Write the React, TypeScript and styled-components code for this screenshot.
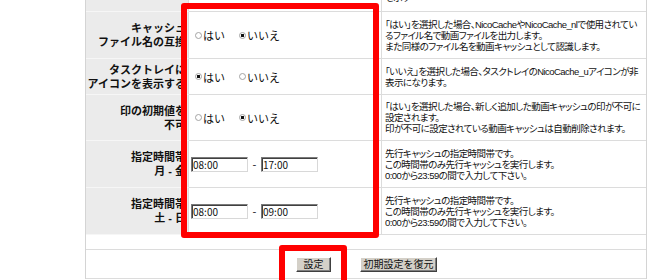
import React from 'react';
import styled, { createGlobalStyle } from 'styled-components';

const GlobalStyle = createGlobalStyle`
  html, body {
    margin: 0;
    padding: 0;
    background: #ffffff;
    overflow: hidden;
  }
  body {
    font-family: "Noto Sans CJK JP", "Noto Sans", sans-serif;
    color: #111;
  }
`;

const Page = styled.div`
  position: relative;
  width: 650px;
  height: 280px;
  overflow: hidden;
`;

const Sheet = styled.div`
  margin-left: 85px;
  margin-top: -28px;
  width: 562px;
  box-sizing: border-box;
  border-left: 1px solid #d4d4d4;
  border-right: 1px solid #d4d4d4;
`;

const Row = styled.div<{ $h: number }>`
  display: grid;
  grid-template-columns: 103px 193px 264px;
  height: ${p => p.$h}px;
`;

const LabelCell = styled.div`
  display: flex;
  flex-direction: column;
  justify-content: center;
  align-items: flex-end;
  box-sizing: border-box;
  padding-right: 2px;
  background: #ebebeb;
  border-right: 1px solid #dcdcdc;
  border-bottom: 1px solid #f6f6f6;
  font-family: "Liberation Sans", "Noto Sans CJK JP", sans-serif;
  font-size: 11px;
  font-weight: bold;
  white-space: nowrap;
  text-align: right;
`;

const ControlCell = styled.div`
  display: flex;
  align-items: center;
  box-sizing: border-box;
  padding-left: 2px;
  border-right: 1px solid #dcdcdc;
  border-bottom: 1px solid #dcdcdc;
  font-size: 11px;
`;

const DescCell = styled.div`
  display: flex;
  flex-direction: column;
  justify-content: center;
  box-sizing: border-box;
  padding-left: 3px;
  border-bottom: 1px solid #dcdcdc;
  font-family: "Liberation Sans", "Noto Sans CJK JP", sans-serif;
  font-size: 9.5px;
  letter-spacing: -0.55px;
  font-feature-settings: "palt";
  white-space: nowrap;
  overflow: hidden;
`;

const DescLine = styled.span`
  display: block;
  height: 11px;
  line-height: 11px;
`;

const LabelLine = styled.span`
  display: block;
  height: 14px;
  line-height: 14px;
`;

const RadioOption = styled.label`
  display: inline-flex;
  align-items: center;
  margin-right: 10px;
  line-height: 12px;
`;

const Radio = styled.input.attrs({ type: 'radio' })`
  appearance: none;
  -webkit-appearance: none;
  box-sizing: border-box;
  margin: 0 1px 0 4px;
  width: 7px;
  height: 7px;
  border: 1px solid #a4a4a4;
  border-radius: 50%;
  background: #fff;

  &:checked {
    background: radial-gradient(circle, #111 0 1.4px, #fff 1.9px);
  }
`;

const TimeField = styled.input`
  box-sizing: border-box;
  width: 57px;
  height: 15px;
  margin: 0;
  padding: 0 0 0 1px;
  border: 1px solid;
  border-color: #7a7a7a #d8d8d8 #d8d8d8 #7a7a7a;
  box-shadow: inset 1px 1px 0 #404040;
  font-family: "Noto Sans CJK JP", "Noto Sans", sans-serif;
  font-size: 10px;
  line-height: 13px;
  color: #111;
  background: #fff;
`;

const Dash = styled.span`
  width: 13px;
  text-align: center;
  font-size: 11px;
`;

const BlankRow = styled.div`
  height: 14px;
  border-bottom: 1px solid #dcdcdc;
`;

const ButtonRow = styled.div`
  display: flex;
  justify-content: center;
  align-items: center;
  gap: 29px;
  height: 29px;
  box-sizing: border-box;
  padding-left: 1px;
  border-bottom: 1px solid #dcdcdc;
`;

const Button = styled.button<{ $w: number }>`
  box-sizing: border-box;
  width: ${p => p.$w}px;
  height: 15px;
  margin: 0;
  padding: 0;
  background: #d4d0c8;
  border: 1px solid;
  border-color: #ffffff #404040 #404040 #ffffff;
  box-shadow: inset -1px -1px 0 #808080;
  font-family: "Noto Sans CJK JP", "Noto Sans", sans-serif;
  font-size: 10px;
  line-height: 12px;
  white-space: nowrap;
  color: #111;
`;

const Highlight = styled.div<{ $x: number; $y: number; $w: number; $h: number }>`
  position: absolute;
  left: ${p => p.$x}px;
  top: ${p => p.$y}px;
  width: ${p => p.$w}px;
  height: ${p => p.$h}px;
  box-sizing: border-box;
  border: 6px solid #ff0000;
  border-radius: 3px;
  pointer-events: none;
`;

type YesNo = { name: string; yes: boolean };

const YesNoControl = ({ name, yes }: YesNo) => (
  <>
    <RadioOption>
      <Radio name={name} defaultChecked={yes} />
      はい
    </RadioOption>
    <RadioOption>
      <Radio name={name} defaultChecked={!yes} />
      いいえ
    </RadioOption>
  </>
);

const TimeRange = ({ from, to }: { from: string; to: string }) => (
  <>
    <TimeField defaultValue={from} />
    <Dash>-</Dash>
    <TimeField defaultValue={to} />
  </>
);

const timeDesc = [
  '先行キャッシュの指定時間帯です。',
  'この時間帯のみ先行キャッシュを実行します。',
  '0:00から23:59の間で入力して下さい。',
];

const rows = [
  {
    h: 40,
    label: ['保存先'],
    control: null,
    desc: ['動画キャッシュの保存先フォルダを指定します。空欄の場合は既定の', 'を示す'],
  },
  {
    h: 47,
    label: ['キャッシュ', 'ファイル名の互換'],
    control: <YesNoControl name="compat" yes={false} />,
    desc: [
      '「はい」を選択した場合、NicoCacheやNicoCache_nlで使用されてい',
      'るファイル名で動画ファイルを出力します。',
      'また同様のファイル名を動画キャッシュとして認識します。',
    ],
  },
  {
    h: 36,
    label: ['タスクトレイに', 'アイコンを表示する'],
    control: <YesNoControl name="tray" yes={true} />,
    desc: ['「いいえ」を選択した場合、タスクトレイのNicoCache_uアイコンが非', '表示になります。'],
  },
  {
    h: 46,
    label: ['印の初期値を', '不可'],
    control: <YesNoControl name="mark" yes={false} />,
    desc: [
      '「はい」を選択した場合、新しく追加した動画キャッシュの印が不可に',
      '設定されます。',
      '印が不可に設定されている動画キャッシュは自動削除されます。',
    ],
  },
  {
    h: 47,
    label: ['指定時間帯', '月 - 金'],
    control: <TimeRange from="08:00" to="17:00" />,
    desc: timeDesc,
  },
  {
    h: 47,
    label: ['指定時間帯', '土 - 日'],
    control: <TimeRange from="08:00" to="09:00" />,
    desc: timeDesc,
  },
];

export default function App() {
  return (
    <Page>
      <GlobalStyle />
      <Sheet>
        {rows.map((r, i) => (
          <Row key={i} $h={r.h}>
            <LabelCell>
              {r.label.map(line => (
                <LabelLine key={line}>{line}</LabelLine>
              ))}
            </LabelCell>
            <ControlCell>{r.control}</ControlCell>
            <DescCell>
              {r.desc.map(line => (
                <DescLine key={line}>{line}</DescLine>
              ))}
            </DescCell>
          </Row>
        ))}
        <BlankRow />
        <ButtonRow>
          <Button $w={35}>設定</Button>
          <Button $w={77}>初期設定を復元</Button>
        </ButtonRow>
      </Sheet>
      <Highlight $x={181} $y={3} $w={198} $h={235} />
      <Highlight $x={279} $y={245} $w={68} $h={50} />
    </Page>
  );
}
